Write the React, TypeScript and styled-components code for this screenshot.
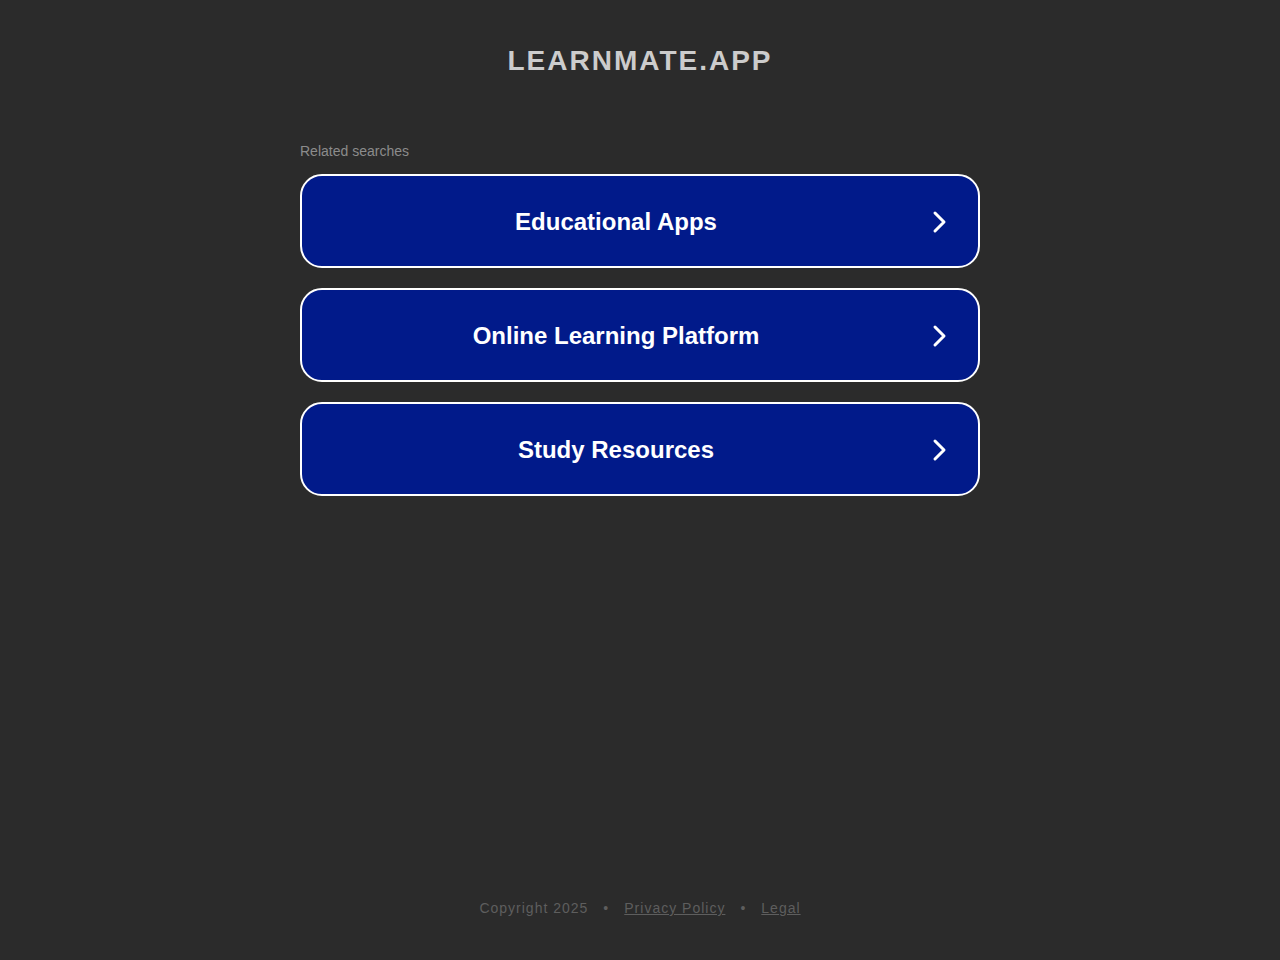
import styled, { createGlobalStyle } from "styled-components";

const GlobalStyle = createGlobalStyle`
  html, body {
    margin: 0;
    padding: 0;
    background: #2b2b2b;
    font-family: Arial, "Liberation Sans", sans-serif;
  }
`;

const Page = styled.div`
  height: 960px;
  display: flex;
  flex-direction: column;
  align-items: center;
`;

const Title = styled.h1`
  margin: 44px 0 0;
  font-size: 28px;
  line-height: 34px;
  font-weight: bold;
  letter-spacing: 2px;
  color: #cccccc;
`;

const Searches = styled.div`
  width: 680px;
  margin-top: 65px;
  display: flex;
  flex-direction: column;
`;

const Label = styled.div`
  font-size: 14px;
  line-height: 16px;
  color: #8c8c8c;
  margin-bottom: 15px;
`;

const List = styled.div`
  display: flex;
  flex-direction: column;
  gap: 20px;
`;

const Item = styled.a`
  box-sizing: border-box;
  height: 94px;
  display: flex;
  align-items: center;
  justify-content: center;
  position: relative;
  border: 2px solid #ffffff;
  border-radius: 22px;
  background: #011a8a;
  color: #ffffff;
  font-size: 24px;
  font-weight: bold;
  text-decoration: none;
  padding: 2px 48px 0 0;
`;

const Chevron = styled.svg`
  position: absolute;
  right: 27px;
  top: calc(50% + 1px);
  transform: translateY(-50%);
`;

const Footer = styled.footer`
  margin-top: auto;
  margin-bottom: 44px;
  font-size: 14px;
  line-height: 16px;
  letter-spacing: 1px;
  color: #5e5e5e;
  display: flex;
  gap: 15px;
`;

const FooterLink = styled.a`
  color: #5e5e5e;
  text-decoration: underline;
`;

const items = ["Educational Apps", "Online Learning Platform", "Study Resources"];

export default function App() {
  return (
    <>
      <GlobalStyle />
      <Page>
        <Title>LEARNMATE.APP</Title>
        <Searches>
          <Label>Related searches</Label>
          <List>
            {items.map((t) => (
              <Item key={t} href="#">
                {t}
                <Chevron width="20" height="24" viewBox="0 0 20 24">
                  <path d="M4 3 L13 12 L4 21" fill="none" stroke="#fff" strokeWidth="3" strokeLinecap="round" strokeLinejoin="round" />
                </Chevron>
              </Item>
            ))}
          </List>
        </Searches>
        <Footer>
          <span>Copyright 2025</span>
          <span>•</span>
          <FooterLink href="#">Privacy Policy</FooterLink>
          <span>•</span>
          <FooterLink href="#">Legal</FooterLink>
        </Footer>
      </Page>
    </>
  );
}
